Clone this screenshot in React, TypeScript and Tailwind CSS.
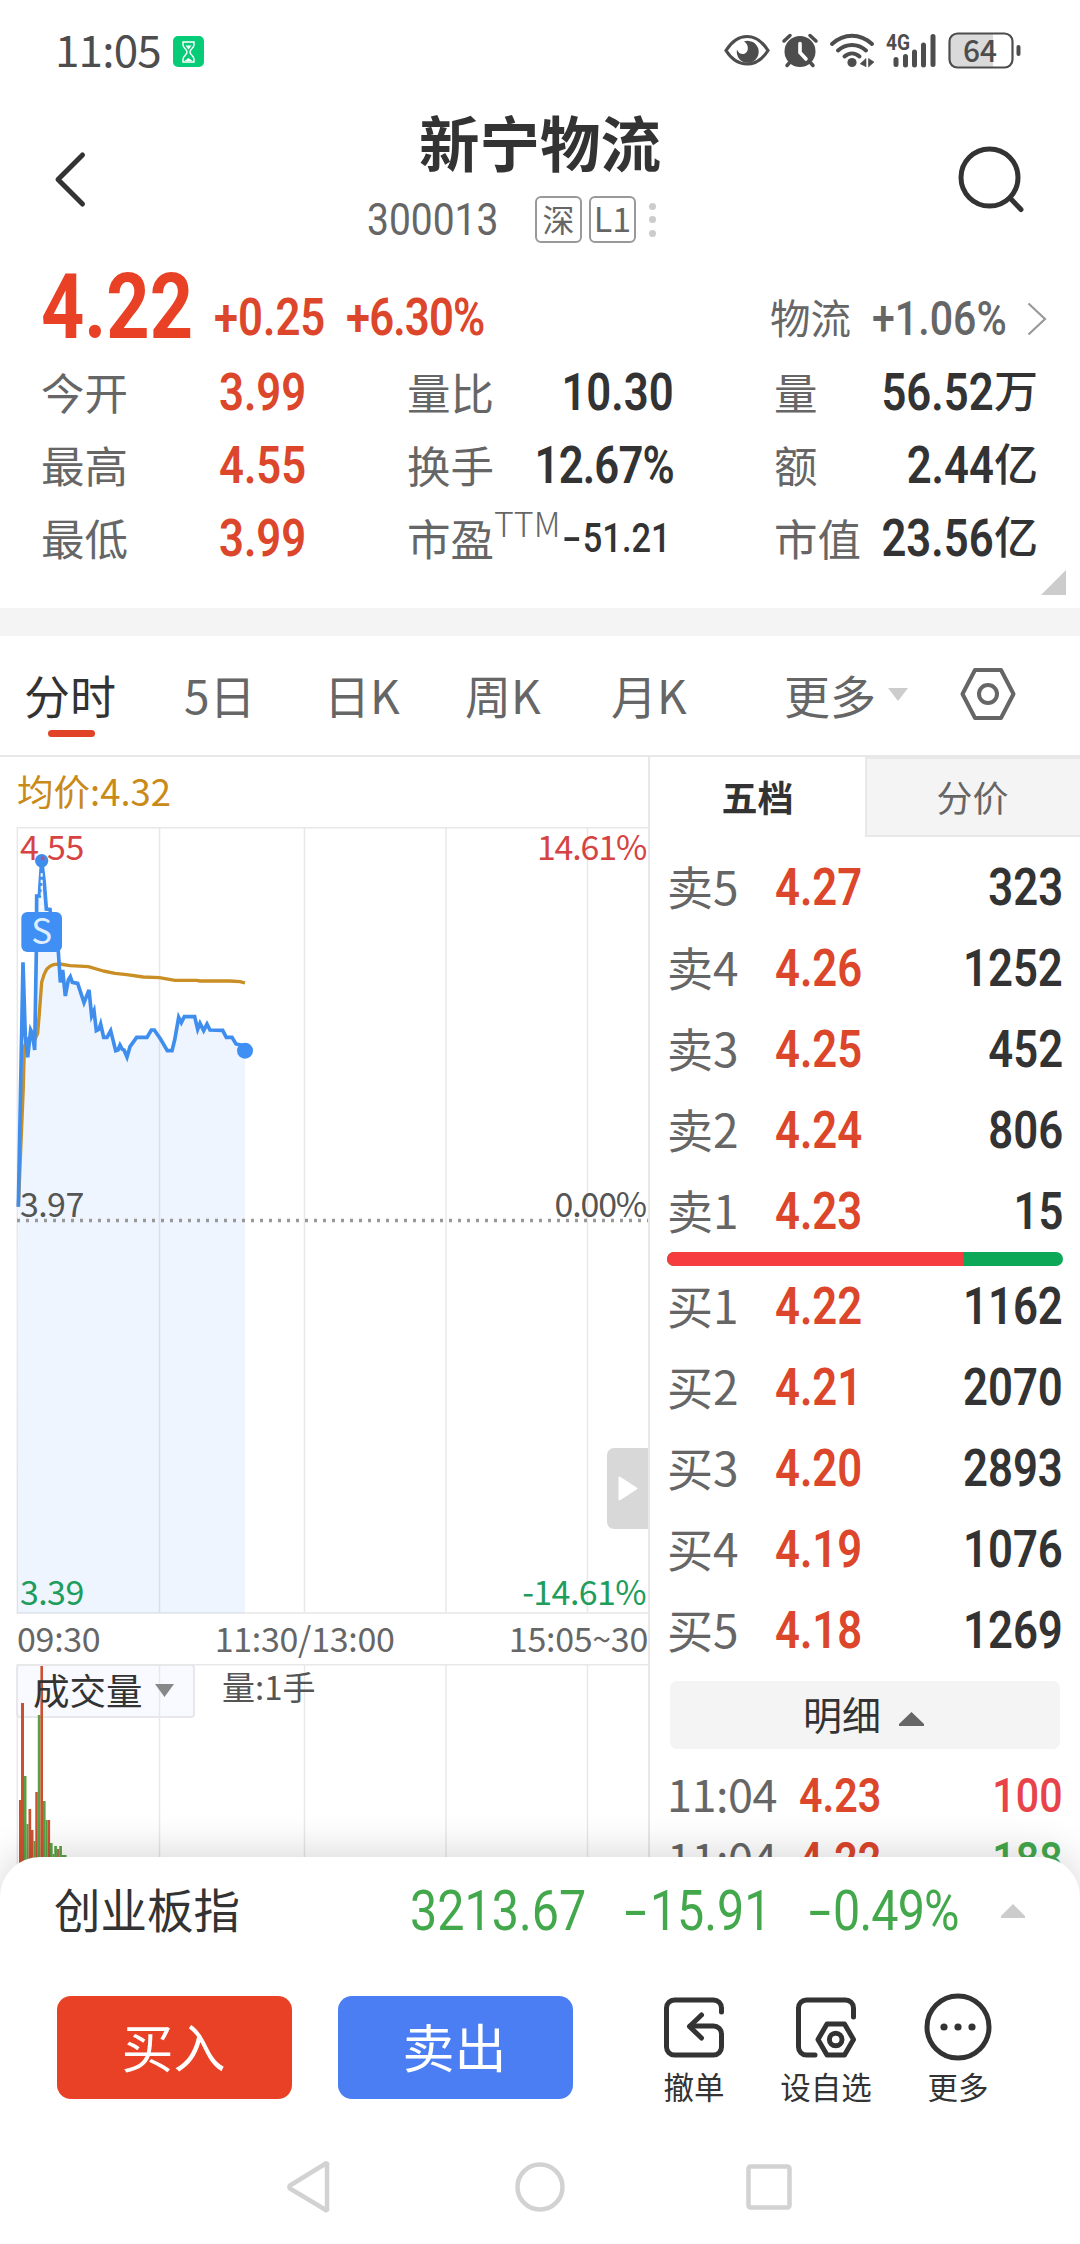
import React from "react"

const PRICE_POINTS =
    "55,1160 69,427 76,650 83,712 92,630 97,640 104,690 109,395 110,228 118,228 125,122 133,190 139,267 150,268 155,300 175,395 181,487 188,450 196,528 205,480 211,470 217,487 233,490 252,548 267,510 275,588 282,572 289,632 297,628 302,612 311,652 321,652 332,632 347,692 354,690 360,675 367,688 372,690 381,711 390,680 410,652 441,652 454,630 463,630 482,658 502,692 516,692 524,660 536,592 544,608 553,590 584,590 593,628 600,610 611,632 621,612 630,630 668,631 679,652 696,652 708,672 722,675 735,690"

const AVG_POINTS =
    "55,1160 70,800 73,680 83,655 104,660 113,640 118,580 125,487 132,464 140,448 150,439 160,434 180,432 210,437 265,440 310,453 345,460 380,464 430,471 478,473 525,481 590,481 600,483 690,483 720,485 735,489"

// x, width, top, colour
const VOLUME: [number, number, number, string][] = [
    [19, 2.5, 136, "#cb5030"],
    [21, 3, 39, "#cb5030"],
    [24, 2.5, 112, "#58a044"],
    [26.5, 2, 160, "#58a044"],
    [28.5, 2.7, 145, "#cb5030"],
    [31, 2.5, 166, "#cb5030"],
    [33.5, 2, 177, "#6d9a4a"],
    [35.3, 2.5, 128, "#cb5030"],
    [37.8, 2.6, 51, "#58a044"],
    [40.4, 2.6, 2, "#cb5030"],
    [43, 2.6, 137, "#58a044"],
    [45.5, 2, 156, "#58a044"],
    [47.5, 2.6, 156, "#cb5030"],
    [50, 2.6, 179, "#58a044"],
    [52.6, 1.7, 190, "#58a044"],
    [54.3, 2.6, 182, "#58a044"],
    [57, 2.3, 185, "#b3714c"],
    [59.3, 2.6, 182, "#58a044"],
    [62, 4.5, 191, "#58a044"],
]

const GRID = [159.5, 304.5, 446, 587.5]

const quotes = [
    ["今开", "3.99", "量比", "10.30", "量", "56.52", "万"],
    ["最高", "4.55", "换手", "12.67%", "额", "2.44", "亿"],
    ["最低", "3.99", "市盈", "-51.21", "市值", "23.56", "亿"],
]

const sells = [
    ["卖5", "4.27", "323"],
    ["卖4", "4.26", "1252"],
    ["卖3", "4.25", "452"],
    ["卖2", "4.24", "806"],
    ["卖1", "4.23", "15"],
]

const buys = [
    ["买1", "4.22", "1162"],
    ["买2", "4.21", "2070"],
    ["买3", "4.20", "2893"],
    ["买4", "4.19", "1076"],
    ["买5", "4.18", "1269"],
]

// condensed figures used for every quote, with a longer minus sign
function Num({ children, bold, className = "" }: { children: string; bold?: boolean; className?: string }) {
    const minus = children.startsWith("-")
    return (
        <span className={"inline-block whitespace-nowrap font-['Roboto','Noto_Sans_CJK_SC',sans-serif] leading-none " + (bold ? "scale-x-[0.84] " : "scale-x-[0.865] ") + className}>
            {minus && <span className="mx-[0.16em] inline-block scale-x-[1.65]">-</span>}
            {minus ? children.slice(1) : children}
        </span>
    )
}

function StatusBar() {
    return (
        <div className="flex h-[102px] items-center pl-[55px] pr-[58px] text-[#4d4d4d]">
            <span className="w-[118px] pb-[7px] text-[44px] leading-none tracking-[-0.8px]">11:05</span>
            <svg width="31" height="31" viewBox="0 0 31 31" className="shrink-0">
                <rect width="31" height="31" rx="5" fill="#07cc77" />
                <path d="M10 6h11v3c0 3-4 4-4 7s4 4 4 7v3H10v-3c0-3 4-4 4-7s-4-4-4-7z" fill="none" stroke="#fff" strokeWidth="1.4" />
                <path d="M12.5 9.500h6l-3 4zM11.500 25l4-3 4 3z" fill="#fff" />
            </svg>
            <svg width="298" height="38" viewBox="724 32 298 38" className="ml-auto shrink-0" fill="none" stroke="#4d4d4d">
                {/* eye */}
                <path d="M726 50.500c5-8 12-14 21-14s16 6 21 14c-5 8-12 13.500-21 13.500s-16-5.500-21-13.500z" strokeWidth="3.200" />
                <path d="M744 41.500a11 11 0 1 1-7 8c1.500 4 5 5.500 8 4 4-2 4-9-1-12z" fill="#4d4d4d" stroke="none" />
                {/* alarm */}
                <circle cx="800" cy="51.500" r="15.500" fill="#4d4d4d" stroke="none" />
                <path d="M784 41l6-5.500M816 41l-6-5.500M791 61l-4 4.500M809 61l4 4.500" strokeWidth="3.500" strokeLinecap="round" />
                <path d="M800 43.500v9l6 6.500" stroke="#fff" strokeWidth="3.600" strokeLinecap="round" />
                {/* wifi */}
                <path d="M832 44c12-11 28-11 40 0M838 50.500c8-7.500 20-7.500 28 0M844.500 56.500c4.500-4 10.500-4 15 0" strokeWidth="4" strokeLinecap="round" />
                <circle cx="852" cy="62.500" r="4.600" fill="#4d4d4d" stroke="none" />
                <path d="M860 64l6-5.500V67M874 62l-5.500 5v-8.500z" fill="#4d4d4d" strokeWidth="0.600" />
                {/* signal */}
                <path d="M896 59.500v5M905.500 56.500V65M914.500 52v13M923.500 45v20M933 36.500v28" strokeWidth="5" strokeLinecap="round" />
                <text x="886" y="50" fill="#4d4d4d" stroke="none" fontFamily="Roboto" fontSize="22" fontWeight="700" textLength="24" lengthAdjust="spacingAndGlyphs">4G</text>
                {/* battery */}
                <path d="M957 34h36v33h-36a7 7 0 0 1-7-7V41a7 7 0 0 1 7-7z" fill="#dadada" stroke="none" />
                <rect x="949.500" y="33.500" width="63" height="34" rx="8" strokeWidth="2.200" />
                <path d="M1018.500 47v7" strokeWidth="4" strokeLinecap="round" />
                <text x="963" y="61.500" fill="#4d4d4d" stroke="none" fontFamily="Noto Sans CJK SC" fontSize="31" fontWeight="500" textLength="34" lengthAdjust="spacingAndGlyphs">64</text>
            </svg>
        </div>
    )
}

function Header() {
    return (
        <div className="flex h-[158px] justify-between px-[54px]">
            <svg width="68" height="60" viewBox="0 0 68 60" className="mt-[48px]">
                <path d="M28.500 5L4 29.500 28.500 54" fill="none" stroke="#333" strokeWidth="5" strokeLinecap="round" strokeLinejoin="round" />
            </svg>
            <div className="flex flex-col items-center">
                <h1 className="mt-[9px] text-[60.500px] font-bold leading-none text-[#333]">新宁物流</h1>
                <div className="mt-[24px] flex h-12 w-[346px] items-center text-[#666]">
                    <Num className="w-[168px] origin-left text-[45px]">300013</Num>
                    <span className="flex h-[47px] w-[47px] shrink-0 items-center justify-center rounded-[6px] border-2 border-[#999] pb-1 text-[32px] leading-none">深</span>
                    <span className="ml-[7px] flex h-[47px] w-[47px] shrink-0 items-center justify-center rounded-[6px] border-2 border-[#999] pb-1 text-[34px] leading-none">L1</span>
                    <span className="ml-[13px] flex flex-col gap-[6.500px]">
                        <i className="size-[7px] rounded-full bg-[#ccc]" />
                        <i className="size-[7px] rounded-full bg-[#ccc]" />
                        <i className="size-[7px] rounded-full bg-[#ccc]" />
                    </span>
                </div>
            </div>
            <svg width="68" height="70" viewBox="0 0 68 70" className="mt-[43px]" fill="none" stroke="#333" strokeWidth="5" strokeLinecap="round">
                <circle cx="31.500" cy="32.500" r="28.500" />
                <path d="M52 53l11 11.500" />
            </svg>
        </div>
    )
}

function Quote() {
    return (
        <div className="relative h-[348px] pl-[41px] pr-[42px]">
            <div className="-mr-[9px] flex h-[97px] items-end">
                <Num bold className="w-[173px] origin-left pb-[4px] text-[90px] font-bold text-[#e84125]">4.22</Num>
                <Num bold className="w-[132px] origin-left pb-[13px] text-[52px] font-semibold text-[#dc462b]">+0.25</Num>
                <Num bold className="w-[200px] origin-left pb-[13px] text-[52px] font-semibold tracking-[-1px] text-[#dc462b]">+6.30%</Num>
                <span className="ml-auto pb-[20px] text-[40.500px] leading-none text-[#666]">物流</span>
                <Num bold className="ml-[21px] w-[155px] origin-left pb-[14px] text-[49px] font-medium text-[#666]">+1.06%</Num>
                <svg width="20" height="34" viewBox="0 0 20 34" className="mb-[21px]">
                    <path d="M1.500 1.500L18 17 1.500 32.500" fill="none" stroke="#999" strokeWidth="2.200" />
                </svg>
            </div>
            {quotes.map((q, i) => (
                <div key={i} className="flex h-[73px] items-center text-[43.500px] leading-none text-[#666]">
                    <span className="w-[178px] pb-[4px]">{q[0]}</span>
                    <Num bold className="w-[188px] origin-left pb-[2px] text-[52px] font-semibold text-[#dc462b]">{q[1]}</Num>
                    <span className="pb-[4px]">{q[2]}</span>
                    {i === 2 && <sup className="top-0 -mt-[34px] text-[34px] font-light leading-none">TTM</sup>}
                    <span className="w-0 grow" />
                    {i === 2 ? (
                        <Num bold className="-ml-20 mr-[3px] origin-right pb-[2px] text-[41px] font-medium text-[#333]">{q[3]}</Num>
                    ) : (
                        <Num bold className={"origin-right pb-[2px] text-[52px] font-semibold text-[#333] " + (i === 1 ? "tracking-[-1px]" : "")}>{q[3]}</Num>
                    )}
                    <div className="ml-[100px] flex w-[264px] items-center justify-between">
                        <span className="w-0 whitespace-nowrap pb-[4px]">{q[4]}</span>
                        <div className="flex items-center text-[#333]">
                            <Num bold className="origin-right pb-[2px] text-[52px] font-semibold">{q[5]}</Num>
                            <span className="pb-[9px] text-[44px] font-medium leading-none">{q[6]}</span>
                        </div>
                    </div>
                </div>
            ))}
            <svg width="25" height="25" className="absolute bottom-[13px] right-[14px]">
                <path d="M25 0v25H0z" fill="#ccc" />
            </svg>
        </div>
    )
}

function PeriodTabs() {
    return (
        <div className="flex h-[121px] items-center border-b-2 border-[#e8e8e8] pb-[3px] pl-[24px] text-[46px] leading-none text-[#666]">
            <div className="relative w-[160px] text-[#333]">
                分时
                <span className="absolute -bottom-[20px] left-[24px] h-[7px] w-[47px] rounded-full bg-[#e04327]" />
            </div>
            <span className="w-[140px]">5日</span>
            <span className="w-[141px]">日K</span>
            <span className="w-[146px]">周K</span>
            <span className="w-[173px]">月K</span>
            <span className="w-[104px]">更多</span>
            <svg width="20" height="13">
                <path d="M0 0h20L10 13z" fill="#ccc" />
            </svg>
            <svg width="56" height="54" viewBox="0 0 56 54" className="ml-[52px]" fill="none" stroke="#666" strokeWidth="4">
                <path d="M15 3h26l12.500 24L41 51H15L2.500 27z" strokeLinejoin="round" />
                <circle cx="28" cy="27" r="9" />
            </svg>
        </div>
    )
}

function PriceChart() {
    return (
        <svg width="648" height="787" viewBox="0 0 648 787" fontFamily="Noto Sans CJK SC" fontSize="34" letterSpacing="-0.6" className="block">
            <g stroke="#e8e8e8" strokeWidth="1.500" fill="none">
                {GRID.map((x) => (
                    <path key={x} d={`M${x} 0V786`} />
                ))}
                <path d="M17 .8H648M17 786H648M17.300 0V787" />
            </g>
            <g transform="translate(0,-7) scale(.33333)">
                <polygon points={PRICE_POINTS + " 735,2380 52,2380"} fill="#3e8ef2" fillOpacity="0.090" />
                <polyline points={AVG_POINTS} fill="none" stroke="#c98f25" strokeWidth="10" strokeLinejoin="round" />
            </g>
            <text x="20" y="33" fill="#d64343">4.55</text>
            <g transform="translate(0,-7) scale(.33333)">
                <polyline points={PRICE_POINTS} fill="none" stroke="#3f8eee" strokeWidth="11" />
                <path d="M125 160V275" stroke="#fff" strokeWidth="6" strokeDasharray="10 9" />
                <circle cx="125" cy="122" r="20" fill="#3f8eee" />
                <circle cx="128" cy="115" r="6" fill="#a05a90" />
                <circle cx="735" cy="692" r="24" fill="#3f8ff5" />
                <rect x="64" y="276" width="122" height="120" rx="18" fill="#3f8ff5" />
            </g>
            <text x="41.500" y="117" textAnchor="middle" fill="#dfeeff" fontSize="35">S</text>
            <text x="646" y="33" textAnchor="end" fill="#d64343" letterSpacing="-1.2">14.61%</text>
            <path d="M17 393.500H648" stroke="#999" strokeWidth="3.500" strokeDasharray="3 6" />
            <g fill="#555">
                <text x="20" y="390">3.97</text>
                <text x="646" y="390" textAnchor="end" letterSpacing="-1.2">0.00%</text>
            </g>
            <g fill="#1f9d5c">
                <text x="20" y="778">3.39</text>
                <text x="646" y="778" textAnchor="end">-14.61%</text>
            </g>
        </svg>
    )
}

function VolumeChart() {
    return (
        <svg width="648" height="233" viewBox="0 0 648 233" fontFamily="Noto Sans CJK SC" className="block">
            <rect x="17" y="1" width="177" height="52" rx="3" fill="#f8faff" stroke="#e8e8ec" strokeWidth="2" />
            <g stroke="#e8e8e8" strokeWidth="1.500">
                {GRID.map((x) => (
                    <path key={x} d={`M${x} 0V233`} />
                ))}
                <path d="M17 .8H648M17.300 0V233" />
            </g>
            {VOLUME.map(([x, w, y, c]) => (
                <rect key={x} x={x} y={y} width={w} height={233 - y} fill={c} />
            ))}
            <text x="33" y="41" fontSize="36.500" fill="#333">成交量</text>
            <path d="M155 20h19l-9.500 13z" fill="#888" />
            <text x="222" y="36" fontSize="33" fill="#555">量:1手</text>
        </svg>
    )
}

function BookRow({ row }: { row: string[] }) {
    return (
        <div className="flex h-[81px] items-center text-[#666]">
            <span className="w-[108px] pb-[5px] text-[46px] leading-none">{row[0]}</span>
            <Num bold className="origin-left text-[52px] font-semibold text-[#dc462b]">{row[1]}</Num>
            <Num bold className="ml-auto origin-right text-[52px] font-semibold text-[#333]">{row[2]}</Num>
        </div>
    )
}

function OrderBook() {
    return (
        <div className="w-[430px] text-[#333]">
            <div className="flex h-[80px] text-[36px] leading-none">
                <div className="flex w-[215px] items-center justify-center pb-[3px] font-bold">五档</div>
                <div className="flex w-[215px] items-center justify-center border-2 border-r-0 border-[#e8e8e8] bg-[#f4f4f4] pb-[3px] pr-[2px] text-[#666]">分价</div>
            </div>
            <div className="pl-[17px] pr-[17px] pt-[10px]">
                {sells.map((r) => (
                    <BookRow key={r[0]} row={r} />
                ))}
                <div className="flex h-[14px] overflow-hidden rounded-full bg-[#0ca858]">
                    <div className="w-[296px] bg-[#f63c3f]" />
                </div>
                {buys.map((r) => (
                    <BookRow key={r[0]} row={r} />
                ))}
                <div className="ml-[3px] mr-[3px] mt-[10px] flex h-[68px] items-center justify-center rounded-[7px] bg-[#f4f4f4] pr-[3px] text-[39px] leading-none">
                    <span className="pb-[4px]">明细</span>
                    <svg width="25" height="14" className="ml-[18px] mt-2">
                        <path d="M12.500 0L25 12v2H0v-2z" fill="#666" />
                    </svg>
                </div>
                <div className="pt-[14px]">
                    {[["4.23", "100"], ["4.22", "188"]].map((t, i) => (
                        <div key={i} className="flex h-16 items-center text-[#666]">
                            <span className="w-[132px] pb-[5px] text-[45px] leading-none tracking-[-0.5px]">11:04</span>
                            <Num bold className="origin-left text-[49px] font-semibold text-[#dc462b]">{t[0]}</Num>
                            <Num bold className={"ml-auto origin-right text-[49px] font-medium " + (i ? "text-[#43a84c]" : "text-[#e8434a]")}>{t[1]}</Num>
                        </div>
                    ))}
                </div>
            </div>
        </div>
    )
}

function BottomSheet() {
    return (
        <div className="relative -mt-[40px] h-[387px] rounded-t-[40px] bg-white shadow-[0_-4px_40px_rgba(0,0,0,0.16)]">
            <div className="flex h-[108px] items-center pl-[54px] text-[#43a84c]">
                <span className="w-[356px] pb-[5px] text-[46.500px] leading-none text-[#333]">创业板指</span>
                <Num className="w-[211px] origin-left text-[56px]">3213.67</Num>
                <Num className="w-[184px] origin-left text-[56px]">-15.91</Num>
                <Num className="w-[196px] origin-left text-[56px] tracking-[-1px]">-0.49%</Num>
                <svg width="24" height="14">
                    <path d="M12 0L24 12v2H0v-2z" fill="#ccc" />
                </svg>
            </div>
            <div className="flex h-[164px] pl-[57px] pt-[31px] text-[#333]">
                <button className="h-[103px] w-[235px] rounded-[14px] bg-[#e84125] pb-1 pr-[2px] text-[52px] leading-none text-white">买入</button>
                <button className="ml-[46px] h-[103px] w-[235px] rounded-[14px] bg-[#4b7ef2] pb-1 pr-[2px] text-[52px] leading-none text-white">卖出</button>
                <div className="ml-[55px] flex w-[132px] flex-col items-center text-[30.500px] leading-none">
                    <svg width="66" height="66" viewBox="0 0 66 66" fill="none" stroke="#333" strokeWidth="5" strokeLinecap="round" strokeLinejoin="round" className="-mt-[1px]">
                        <path d="M60.500 17v-4a8 8 0 0 0-8-8h-39a8 8 0 0 0-8 8v39a8 8 0 0 0 8 8h39a8 8 0 0 0 8-8V39a8 8 0 0 0-8-8H29" />
                        <path d="M40.500 20L28.500 31.500l12 11.500" />
                    </svg>
                    <span className="mt-[10px]">撤单</span>
                </div>
                <div className="flex w-[132px] flex-col items-center text-[30.500px] leading-none">
                    <svg width="66" height="66" viewBox="0 0 66 66" fill="none" stroke="#333" strokeWidth="5" strokeLinecap="round" strokeLinejoin="round" className="-mt-[1px]">
                        <path d="M60.500 22v-9a8 8 0 0 0-8-8h-39a8 8 0 0 0-8 8v39a8 8 0 0 0 8 8H22" />
                        <path d="M34 29h17.500l9 15.500-9 15.500H34l-9-15.500z" />
                        <circle cx="42.700" cy="44.500" r="6.300" />
                    </svg>
                    <span className="mt-[10px]">设自选</span>
                </div>
                <div className="flex w-[132px] flex-col items-center text-[30.500px] leading-none">
                    <svg width="68" height="68" viewBox="0 0 68 68" className="-mt-[3px]">
                        <circle cx="34" cy="34" r="31" fill="none" stroke="#333" strokeWidth="5" />
                        <circle cx="20" cy="34" r="3.600" fill="#333" />
                        <circle cx="34" cy="34" r="3.600" fill="#333" />
                        <circle cx="48" cy="34" r="3.600" fill="#333" />
                    </svg>
                    <span className="mt-[10px]">更多</span>
                </div>
            </div>
            <svg width="1080" height="115" viewBox="0 2129 1080 115" fill="none" stroke="#d2d2d2" strokeWidth="4.500" strokeLinejoin="round">
                <path d="M327 2165v43.500a1 1 0 0 1-2 1L290 2188.500a2 2 0 0 1 0-3L325 2164a1 1 0 0 1 2 1z" />
                <circle cx="540" cy="2187" r="22.500" />
                <rect x="748.500" y="2166.500" width="41" height="41" rx="2" />
            </svg>
        </div>
    )
}

export default function App() {
    return (
        <div className="h-[2244px] w-[1080px] overflow-hidden bg-white font-['Noto_Sans_CJK_SC',sans-serif]">
            <div className="h-[1897px] overflow-hidden">
                <StatusBar />
                <Header />
                <Quote />
                <div className="h-[28px] bg-[#f4f4f4]" />
                <PeriodTabs />
                <div className="flex">
                    <div className="relative w-[650px] shrink-0 border-r-2 border-[#e8e8e8]">
                        <div className="flex h-[70px] items-center pb-[2px] pl-[17px] text-[36.500px] leading-none text-[#c98a18]">均价:4.32</div>
                        <PriceChart />
                        <div className="flex h-[50px] items-center justify-between pb-[3px] pl-[17px] text-[34px] leading-none tracking-[-0.3px] text-[#666]">
                            <span>09:30</span>
                            <span>11:30/13:00</span>
                            <span>15:05~30</span>
                        </div>
                        <VolumeChart />
                        <div className="absolute right-0 top-[691px] flex h-[81px] w-[41px] items-center justify-center rounded-l-[7px] bg-[#d8d8d8]">
                            <svg width="20" height="25" viewBox="0 0 20 25">
                                <path d="M1.500 1.500L18.500 12.500 1.500 23.500z" fill="#fff" stroke="#fff" strokeWidth="2" strokeLinejoin="round" />
                            </svg>
                        </div>
                    </div>
                    <OrderBook />
                </div>
            </div>
            <BottomSheet />
        </div>
    )
}
